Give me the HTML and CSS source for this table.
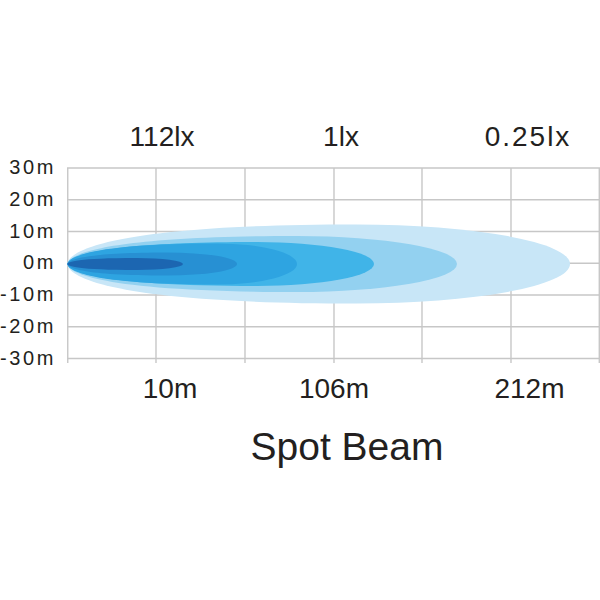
FILE: index.html
```html
<!DOCTYPE html>
<html lang="en">
<head>
<meta charset="utf-8">
<title>Spot Beam</title>
<link rel="stylesheet" href="styles.css">
</head>
<body>
<div class="page">
  <div class="lux">
    <span class="lux-label">112lx</span>
    <span class="lux-label">1lx</span>
    <span class="lux-label lux-wide">0.25lx</span>
  </div>
  <div class="chart">
    <div class="yaxis">
      <span class="ylabel">30m</span>
      <span class="ylabel">20m</span>
      <span class="ylabel">10m</span>
      <span class="ylabel">0m</span>
      <span class="ylabel">-10m</span>
      <span class="ylabel">-20m</span>
      <span class="ylabel">-30m</span>
    </div>
    <svg class="plot" width="533" height="222" viewBox="0 0 533 222" xmlns="http://www.w3.org/2000/svg">
      <g class="grid">
        <line x1="0" y1="16" x2="533" y2="16"/>
        <line x1="0" y1="47.75" x2="533" y2="47.75"/>
        <line x1="0" y1="79.5" x2="533" y2="79.5"/>
        <line x1="0" y1="111.25" x2="533" y2="111.25"/>
        <line x1="0" y1="143" x2="533" y2="143"/>
        <line x1="0" y1="174.75" x2="533" y2="174.75"/>
        <line x1="0" y1="206.5" x2="533" y2="206.5"/>
        <line x1="0.75" y1="16" x2="0.75" y2="211"/>
        <line x1="89" y1="16" x2="89" y2="211"/>
        <line x1="178" y1="16" x2="178" y2="211"/>
        <line x1="267" y1="16" x2="267" y2="211"/>
        <line x1="355" y1="16" x2="355" y2="211"/>
        <line x1="444" y1="16" x2="444" y2="211"/>
        <line x1="532.3" y1="16" x2="532.3" y2="211"/>
      </g>
      <path class="b6" d="M0.5,112 C0.5,100 40,72.5 290,72.5 A213,39.5 0 0 1 503,112 A213,39.5 0 0 1 290,151.5 C40,151.5 0.5,124 0.5,112Z"/>
      <path class="b5" d="M0.5,112 C0.5,103.6 32,84 230,84 A160,28 0 0 1 390,112 A160,28 0 0 1 230,140 C32,140 0.5,120.4 0.5,112Z"/>
      <path class="b4" d="M0.5,112 C0.5,105.4 27,90 190,90 A117,22 0 0 1 307,112 A117,22 0 0 1 190,134 C27,134 0.5,118.6 0.5,112Z"/>
      <path class="b3" d="M0.5,112 C0.5,105.8 22,91.5 150,91.5 A80,20.5 0 0 1 230,112 A80,20.5 0 0 1 150,132.5 C22,132.5 0.5,118.2 0.5,112Z"/>
      <path class="b2" d="M0.5,112 C0.5,108.5 14,100.5 100,100.5 A70,11.5 0 0 1 170,112 A70,11.5 0 0 1 100,123.5 C14,123.5 0.5,115.5 0.5,112Z"/>
      <path class="b1" d="M0.5,112 C0.5,109.8 10,106 70,106 A46,6 0 0 1 116,112 A46,6 0 0 1 70,118 C10,118 0.5,114.2 0.5,112Z"/>
    </svg>
  </div>
  <div class="dist">
    <span class="dist-label">10m</span>
    <span class="dist-label">106m</span>
    <span class="dist-label">212m</span>
  </div>
  <h1 class="title">Spot Beam</h1>
</div>
</body>
</html>
```
FILE: styles.css
```css
html, body {
  margin: 0;
  padding: 0;
  background: #ffffff;
}

.page {
  width: 600px;
  height: 600px;
  background: #ffffff;
  color: #231f20;
  font-family: "Liberation Sans", Arial, sans-serif;
  overflow: hidden;
}

.lux {
  display: grid;
  grid-template-columns: 124px 234px 140px;
  padding-left: 100px;
  margin-top: 122px;
  height: 30px;
  font-size: 28px;
  line-height: 30px;
}

.lux-label {
  text-align: center;
  white-space: nowrap;
}

.lux-wide {
  letter-spacing: 2px;
}

.chart {
  display: grid;
  grid-template-columns: 67px 533px;
  height: 222px;
}

.yaxis {
  display: grid;
  grid-template-rows: repeat(7, 31.75px);
  font-size: 20px;
  line-height: 31.75px;
  letter-spacing: 2.6px;
  text-align: right;
  padding-right: 11.4px;
}

.ylabel {
  white-space: nowrap;
}

.plot {
  display: block;
}

.grid line {
  stroke: #c7c7c7;
  stroke-width: 1.4;
}

.b6 { fill: #c8e6f7; }
.b5 { fill: #93d1f0; }
.b4 { fill: #40b4e8; }
.b3 { fill: #2ea4e1; }
.b2 { fill: #2790d3; }
.b1 { fill: #1c66b1; }

.dist {
  display: grid;
  grid-template-columns: 60px 268px 123px;
  padding-left: 140px;
  font-size: 28px;
  line-height: 29px;
  height: 29px;
}

.dist-label {
  text-align: center;
  white-space: nowrap;
}

.title {
  margin: 21.5px 0 0 0;
  padding-left: 94px;
  text-align: center;
  font-size: 39px;
  font-weight: normal;
  line-height: 44px;
}
```
